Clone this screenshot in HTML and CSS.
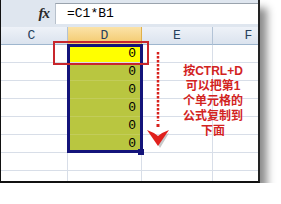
FILE: index.html
```html
<!DOCTYPE html>
<html>
<head>
<meta charset="utf-8">
<link rel="stylesheet" href="styles.css">
</head>
<body>
<div class="shot">
  <div class="fbar">
    <div class="fx">fx</div>
    <div class="finput">=C1*B1</div>
  </div>
  <div class="sheet">
    <div class="hc">C</div><div class="hc hsel">D</div><div class="hc">E</div><div class="hc">F</div>
    <div class="c"></div><div class="c d1">0</div><div class="c"></div><div class="c"></div>
    <div class="c"></div><div class="c dg">0</div><div class="c"></div><div class="c"></div>
    <div class="c"></div><div class="c dg">0</div><div class="c"></div><div class="c"></div>
    <div class="c"></div><div class="c dg">0</div><div class="c"></div><div class="c"></div>
    <div class="c"></div><div class="c dg">0</div><div class="c"></div><div class="c"></div>
    <div class="c"></div><div class="c dg">0</div><div class="c"></div><div class="c"></div>
    <div class="c"></div><div class="c"></div><div class="c"></div><div class="c"></div>
    <div class="c"></div><div class="c"></div><div class="c"></div><div class="c"></div>
  </div>
  <div class="selection"></div>
  <div class="handle"></div>
  <div class="redbox"></div>
  <svg class="arrow" width="40" height="110" viewBox="0 0 40 110">
    <line x1="18" y1="7" x2="18" y2="76" stroke="#d8201c" stroke-width="2.5" stroke-dasharray="2.5 1.5"/>
    <rect x="16.5" y="79" width="3" height="3" fill="#d8201c"/>
    <path d="M9 86 Q14 88 18 92 Q22 88 27 86 L18 101 Z" fill="#b0b0b0" transform="translate(2 2)" opacity="0.7"/>
    <path d="M7 85 Q13 87 18 91 Q23 87 29 85 L18 101 Z" fill="#e0201c"/>
  </svg>
  <div class="note">按CTRL+D<br>可以把第1<br>个单元格的<br>公式复制到<br>下面</div>
</div>
</body>
</html>
```
FILE: styles.css
```css
html, body {
  margin: 0;
  padding: 0;
  background: #ffffff;
}
.shot {
  position: relative;
  width: 257px;
  height: 181px;
  border-left: 1px solid #111;
  border-right: 2px solid #222;
  border-bottom: 2px solid #111;
  overflow: hidden;
  background: #fff;
  box-shadow: 7px 8px 8px rgba(0,0,0,0.45);
}
.fbar {
  display: flex;
  height: 27px;
  background: #dfe6ef;
  box-sizing: border-box;
  padding-top: 3px;
  padding-bottom: 3px;
}
.fx {
  width: 54px;
  box-sizing: border-box;
  padding-right: 6px;
  text-align: right;
  font-family: "Liberation Serif", serif;
  font-style: italic;
  font-weight: bold;
  font-size: 15px;
  line-height: 21px;
  color: #2a2a2a;
  letter-spacing: -1px;
}
.finput {
  flex: 1;
  background: #fff;
  border-top: 1px solid #9aa3ad;
  border-left: 1px solid #b7c0cb;
  padding-left: 11px;
  font-family: "Liberation Mono", monospace;
  font-size: 13px;
  line-height: 20px;
  color: #000;
}
.sheet {
  display: grid;
  grid-template-columns: 72px 74px 71px 72px;
  grid-auto-rows: 18px;
  margin-left: -5px;
}
.hc {
  background: linear-gradient(#eef2f8, #dbe3ee);
  border-right: 1px solid #b3c3d6;
  border-bottom: 1px solid #9eb6ce;
  box-sizing: border-box;
  text-align: center;
  font-family: "Liberation Mono", monospace;
  font-size: 13px;
  line-height: 18px;
  color: #27405c;
}
.hsel {
  background: linear-gradient(#fbe3a8, #f3c96c);
  border-right-color: #e0b04a;
}
.c {
  border-right: 1px solid #d8dee8;
  border-bottom: 1px solid #d8dee8;
  box-sizing: border-box;
  font-family: "Liberation Mono", monospace;
  font-size: 13px;
  line-height: 18px;
  text-align: right;
  padding-right: 5px;
  color: #000;
}
.d1 {
  background: #ffff00;
}
.dg {
  background: #b9c640;
  border-bottom-color: #c2cc5a;
}
.selection {
  position: absolute;
  left: 66px;
  top: 44px;
  width: 70px;
  height: 103px;
  border: 3px solid #14147a;
}
.handle {
  position: absolute;
  left: 137px;
  top: 149px;
  width: 6px;
  height: 6px;
  background: #14147a;
}
.redbox {
  position: absolute;
  left: 52px;
  top: 41px;
  width: 92px;
  height: 20px;
  border: 2px solid #c8262c;
}
.arrow {
  position: absolute;
  left: 139px;
  top: 45px;
}
.note {
  position: absolute;
  left: 172px;
  top: 64px;
  width: 80px;
  text-align: center;
  font-family: "Liberation Sans", "Noto Sans CJK SC", sans-serif;
  font-weight: bold;
  font-size: 12px;
  line-height: 15px;
  color: #d2231f;
}
```
